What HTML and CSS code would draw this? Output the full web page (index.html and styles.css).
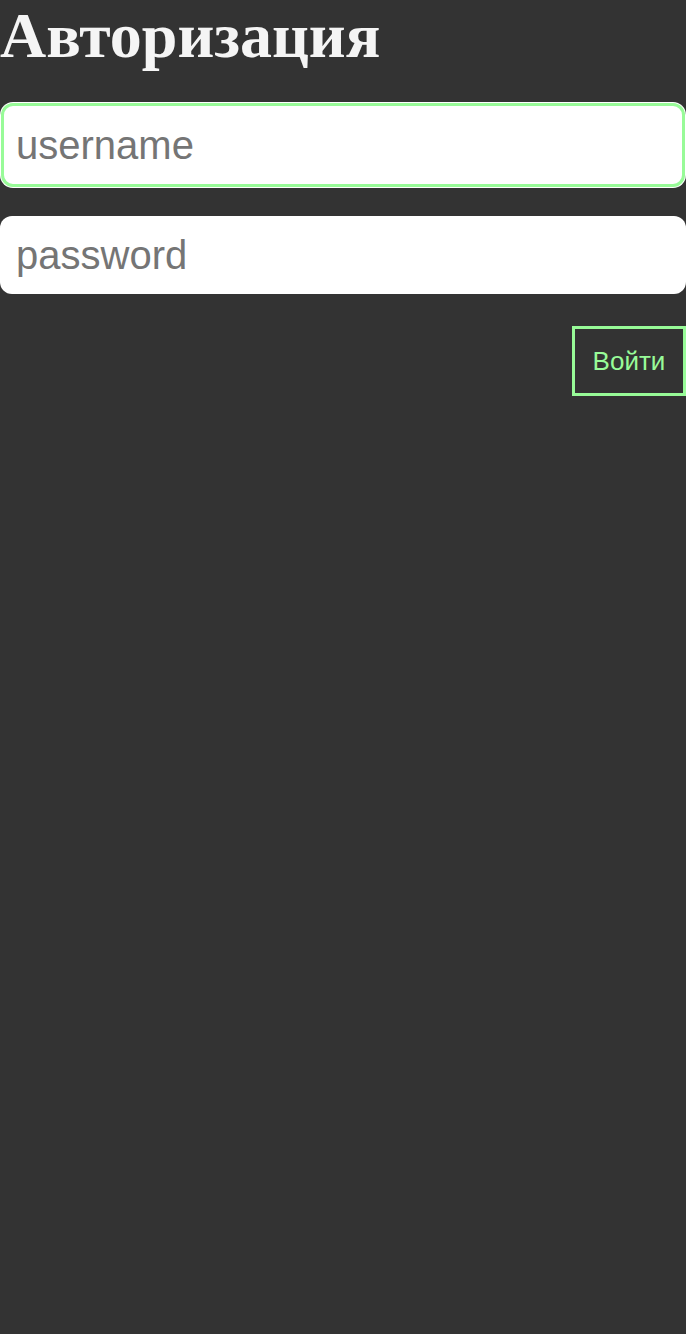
FILE: index.html
```html
<!DOCTYPE html>
<html lang="ru">
<head>
<meta charset="utf-8">
<title>Авторизация</title>
<link rel="stylesheet" href="styles.css">
</head>
<body>
<main class="page">
  <h1 class="title">Авторизация</h1>
  <form class="form">
    <input class="field field-focus" type="text" placeholder="username">
    <input class="field field-pass" type="password" placeholder="password">
    <div class="actions">
      <button class="btn" type="button">Войти</button>
    </div>
  </form>
</main>
</body>
</html>
```

FILE: styles.css
```css
html, body {
  margin: 0;
  padding: 0;
  background: #333333;
  height: 100%;
}

.page {
  display: flex;
  flex-direction: column;
}

.title {
  margin: 0;
  font-family: "Liberation Serif", "Times New Roman", serif;
  font-weight: bold;
  font-size: 64px;
  line-height: 71px;
  color: #f5f5f5;
}

.form {
  display: flex;
  flex-direction: column;
  margin-top: 32px;
}

.field {
  box-sizing: border-box;
  width: 100%;
  border: none;
  border-radius: 12px;
  background: #ffffff;
  font-family: "Liberation Sans", Arial, sans-serif;
  font-size: 40px;
  line-height: 46px;
  height: 78px;
  padding: 16px 16px;
  color: #222;
  outline: none;
}

.field::placeholder {
  color: #757575;
}

.field-focus {
  border: 3px solid #98fb98;
  height: 84px;
  padding: 16px 12px;
  width: calc(100% - 2px);
  margin: 0 1px;
  box-shadow: 0 0 0 1px #ffffff;
}

.field-pass {
  margin-top: 29px;
}

.actions {
  display: flex;
  justify-content: flex-end;
  margin-top: 32px;
}

.btn {
  box-sizing: border-box;
  height: 70px;
  width: 114px;
  padding: 0;
  background: transparent;
  border: 3px solid #98fb98;
  color: #98fb98;
  font-family: "Liberation Sans", Arial, sans-serif;
  font-size: 26px;
  line-height: 30px;
  border-radius: 0;
}
```
